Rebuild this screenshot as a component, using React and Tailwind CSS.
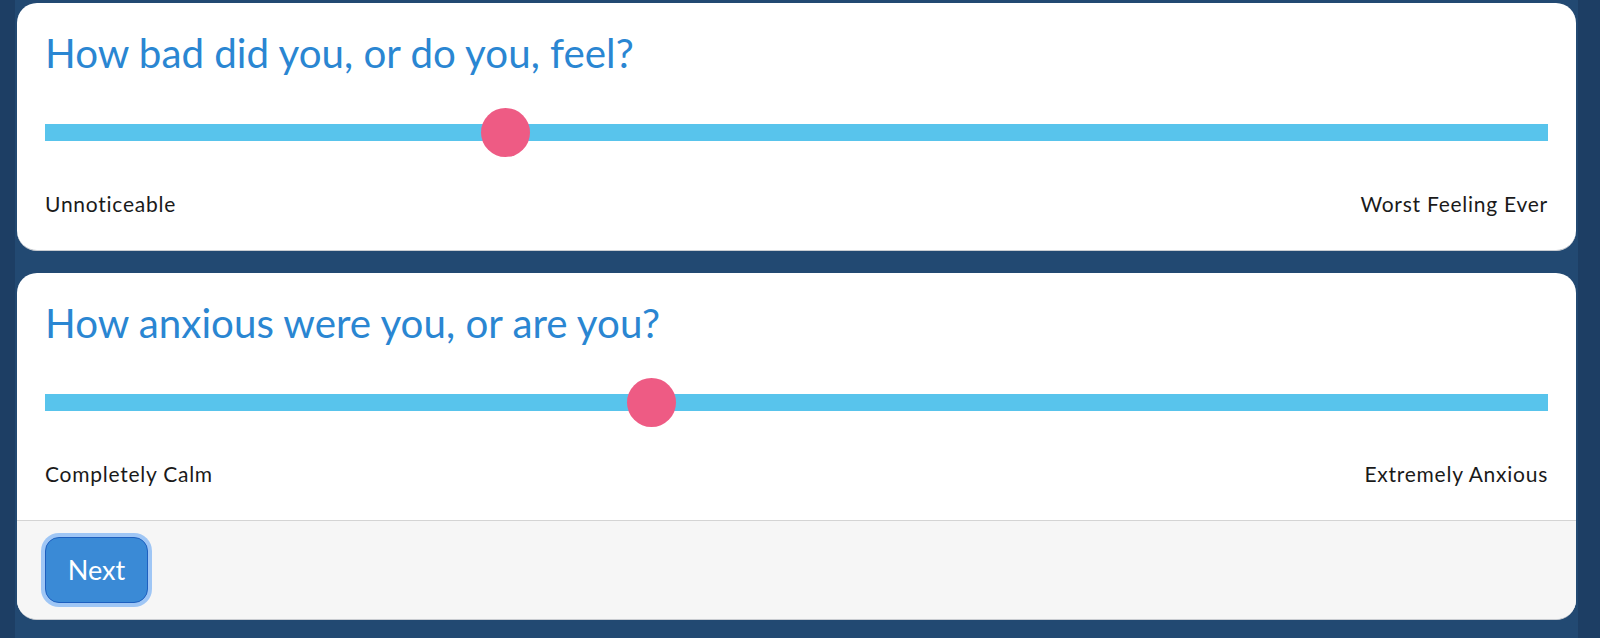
import React from 'react';

const questions = [
  { id: 'bad', title: 'How bad did you, or do you, feel?', low: 'Unnoticeable', high: 'Worst Feeling Ever', value: 0.3 },
  { id: 'anxious', title: 'How anxious were you, or are you?', low: 'Completely Calm', high: 'Extremely Anxious', value: 0.4 },
];

function Slider({ value }) {
  // thumb is 49px, so its left edge travels over (100% - 49px)
  return (
    <div className="relative h-[49px] mt-[32px]">
      <div className="absolute left-0 right-0 top-[16px] h-[17px] bg-[#58c4ec]" />
      <div
        className="absolute top-0 w-[49px] h-[49px] rounded-full bg-[#ee5b84]"
        style={{ left: `calc(${value * 100}% - ${value * 49}px)` }}
      />
    </div>
  );
}

function Question({ q }) {
  return (
    <div className="px-[28px] pt-[26px] pb-[34px]">
      <h2 className="text-[40.3px] leading-[47px] text-[#2a86d2] font-normal">{q.title}</h2>
      <Slider value={q.value} />
      <div className="flex justify-between mt-[35px] text-[21px] leading-[24px] tracking-[0.75px] text-[#1a1a1a]">
        <span>{q.low}</span>
        <span>{q.high}</span>
      </div>
    </div>
  );
}

export default function App() {
  return (
    <div className="h-[638px] overflow-hidden bg-[#1d3e64]" style={{ fontFamily: 'Lato, "Open Sans", sans-serif' }}>
      <div className="mx-[15px] w-[1563px] h-full bg-[#224972] px-[2px] pt-[3px]">
        <div className="bg-white rounded-[20px] border-b border-[#c9ccd1] overflow-hidden">
          <Question q={questions[0]} />
        </div>
        <div className="mt-[22px] bg-white rounded-[20px] border-b border-[#c9ccd1] overflow-hidden">
          <Question q={questions[1]} />
          <div className="bg-[#f6f6f6] border-t border-[#d4d4d4] h-[99px] px-[24px] pt-[12px]">
            <div className="inline-block rounded-[18px] bg-[#9fc6f5] p-[4px]">
              <button className="w-[103px] h-[66px] rounded-[14px] bg-[#3a8ad6] border border-[#1d5fbf] text-white text-[27px]">
                Next
              </button>
            </div>
          </div>
        </div>
      </div>
    </div>
  );
}
